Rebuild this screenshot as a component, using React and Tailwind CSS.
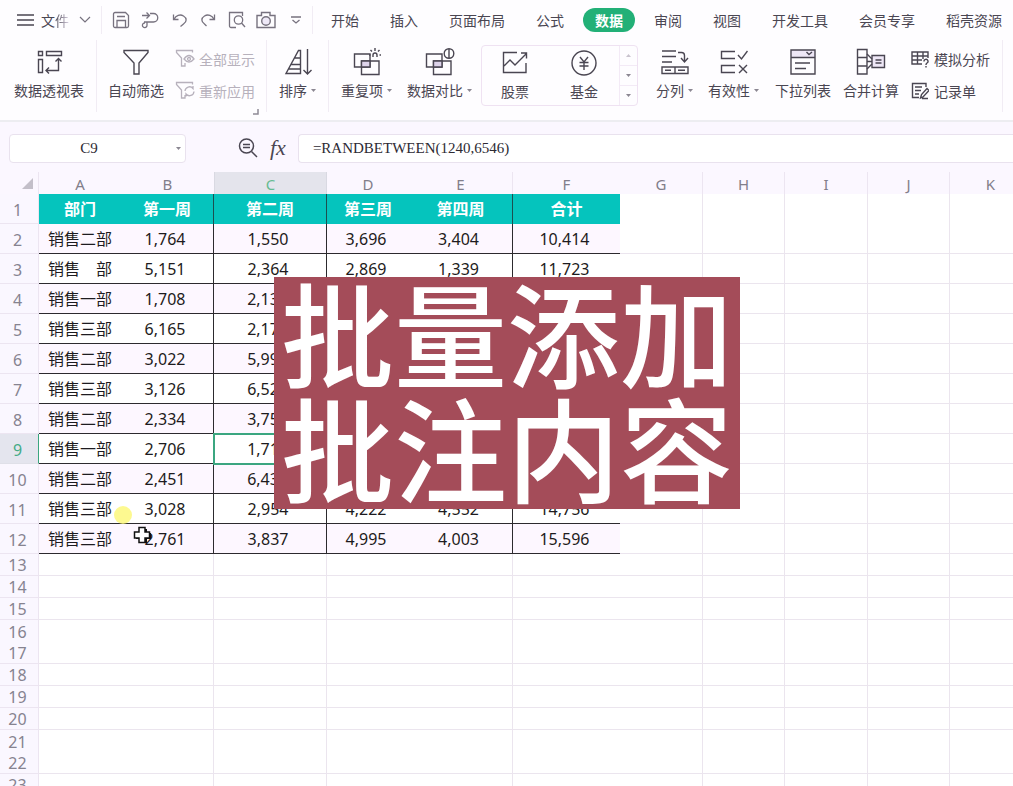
import React, { useState } from "react";

const tabs = [
  "开始",
  "插入",
  "页面布局",
  "公式",
  "数据",
  "审阅",
  "视图",
  "开发工具",
  "会员专享",
  "稻壳资源",
];

const columns = [
  { name: "A", width: "w-[82px]" },
  { name: "B", width: "w-[93px]", line: true },
  { name: "C", width: "w-[113px]", line: true },
  { name: "D", width: "w-[82px]" },
  { name: "E", width: "w-[104px]", line: true },
  { name: "F", width: "w-[107px]" },
  { name: "G", width: "w-[83px]", line: true },
  { name: "H", width: "w-[82px]", line: true },
  { name: "I", width: "w-[83px]", line: true },
  { name: "J", width: "w-[82px]", line: true },
  { name: "K", width: "w-[82px]", line: true },
];

const titles = ["部门", "第一周", "第二周", "第三周", "第四周", "合计"];

const data = [
  ["销售二部", "1,764", "1,550", "3,696", "3,404", "10,414"],
  ["销售　部", "5,151", "2,364", "2,869", "1,339", "11,723"],
  ["销售一部", "1,708", "2,13", "", "", ""],
  ["销售三部", "6,165", "2,17", "", "", ""],
  ["销售二部", "3,022", "5,99", "", "", ""],
  ["销售三部", "3,126", "6,52", "", "", ""],
  ["销售二部", "2,334", "3,75", "", "", ""],
  ["销售一部", "2,706", "1,71", "", "", ""],
  ["销售二部", "2,451", "6,43", "", "", ""],
  ["销售三部", "3,028", "2,954", "4,222", "4,552", "14,756"],
  ["销售三部", "2,761", "3,837", "4,995", "4,003", "15,596"],
];

const blankRows = [13, 14, 15, 16, 17, 18, 19, 20, 21, 22, 23];
const noLine = [16, 21];

const Icon = ({ w = 28, h = 28, sw = 1.4, children }) => (
  <svg
    width={w}
    height={h}
    viewBox={`0 0 ${w} ${h}`}
    fill="none"
    stroke="currentColor"
    strokeWidth={sw}
    aria-hidden="true"
    className="shrink-0"
  >
    {children}
  </svg>
);

const Caret = () => (
  <svg width="5" height="3" viewBox="0 0 5 3" fill="#8b8792" aria-hidden="true" className="shrink-0">
    <path d="M0 0h5L2.5 3z" />
  </svg>
);

const Divider = ({ className }) => <div className={`w-px bg-[#f1ecf4] ${className}`} />;

const QuickButton = ({ label, className, children }) => (
  <button type="button" aria-label={label} className={`shrink-0 text-[#77727f] ${className}`}>
    {children}
  </button>
);

const RibbonButton = ({ label, caret, className, children }) => (
  <button type="button" className={`flex shrink-0 flex-col items-center ${className}`}>
    {children}
    <span className="flex items-center gap-1 whitespace-nowrap leading-7">
      {label}
      {caret && <Caret />}
    </span>
  </button>
);

const SmallButton = ({ label, className, children }) => (
  <button type="button" className={`flex items-center whitespace-nowrap leading-5 ${className}`}>
    {children}
    {label}
  </button>
);

const TopBar = () => {
  const [active, setActive] = useState("数据");

  return (
    <div className="flex h-10 items-center pl-[17px] pr-[11px]">
      <button type="button" className="flex shrink-0 items-center gap-[7px] whitespace-nowrap">
        <Icon w={17} h={14}>
          <path d="M0 2h17M0 7h17M0 12h17" />
        </Icon>
        <span>
          文<span className="bg-linear-to-r from-[#4a4652] to-[#dcd4e4] bg-clip-text text-transparent">件</span>
        </span>
      </button>
      <QuickButton label="更多" className="ml-[10px]">
        <Icon w={12} h={8} sw={1.2}>
          <path d="M1 1l5 5 5-5" />
        </Icon>
      </QuickButton>
      <Divider className="ml-[10px] h-7" />
      <QuickButton label="保存" className="ml-[10px]">
        <Icon w={18} h={18} sw={1.3}>
          <path d="M1.5 3a1.5 1.5 0 0 1 1.5-1.500h10.500L16.500 4.500V15a1.500 1.500 0 0 1-1.500 1.500H3A1.500 1.500 0 0 1 1.500 15zM5 16V9.500h8.500V16M5 5.500h8" />
        </Icon>
      </QuickButton>
      <QuickButton label="输出" className="ml-[11px]">
        <Icon w={18} h={18} sw={1.3}>
          <path d="M1 4.500h7M5.500 1.500l3 3-3 3M9 2.500h3.500a4 4 0 0 1 0 8.500H3M6 11v3a2.300 2.300 0 1 1-2-2" />
        </Icon>
      </QuickButton>
      <QuickButton label="撤销" className="ml-[13px]">
        <Icon w={16} h={16} sw={1.3}>
          <path d="M1.500 2.500v5h5M2 7.200C4 3.500 8 1.800 11.500 4s3.500 5.500 0 8l-3 2.500" />
        </Icon>
      </QuickButton>
      <QuickButton label="恢复" className="ml-3">
        <Icon w={16} h={16} sw={1.3}>
          <path d="M14.500 2.500v5h-5M14 7.200C12 3.500 8 1.800 4.500 4s-3.500 5.500 0 8l2 2" />
        </Icon>
      </QuickButton>
      <QuickButton label="打印预览" className="ml-3">
        <Icon w={18} h={18} sw={1.3}>
          <path d="M8 16.500H3a1.500 1.500 0 0 1-1.500-1.500V1.500h13V5" />
          <circle cx="10.500" cy="9" r="4.200" />
          <path d="M13.500 12l3.500 4" />
        </Icon>
      </QuickButton>
      <QuickButton label="截图" className="ml-[10px]">
        <Icon w={20} h={18} sw={1.4}>
          <path d="M1 4.500h4.500v-3H14v3h5v12H1z" />
          <circle cx="10" cy="10" r="4.300" fill="#efe9f8" />
        </Icon>
      </QuickButton>
      <QuickButton label="自定义快速访问" className="ml-[15px]">
        <Icon w={10} h={8} sw={1.3}>
          <path d="M0 1h10M1.500 4L5 7l3.500-3" />
        </Icon>
      </QuickButton>
      <Divider className="ml-[11px] h-7" />
      <nav className="ml-[18px] flex flex-1 items-center justify-between whitespace-nowrap">
        {tabs.map((tab) => (
          <button
            key={tab}
            type="button"
            onClick={() => setActive(tab)}
            className={
              tab === active
                ? "-mx-3 rounded-full bg-[#22b077] px-3 font-bold leading-6 text-white"
                : "leading-6"
            }
          >
            {tab}
          </button>
        ))}
      </nav>
    </div>
  );
};

const Ribbon = () => (
  <div className="flex h-20 items-start pl-[14px]">
    <RibbonButton label="数据透视表" className="pt-2">
      <Icon>
        <path d="M3.500 3.500h4v4h-4zM11.500 3.500h15v4h-15zM3.500 11.500h4v13h-4z" />
        <path d="M23.500 11v11.500H11M20.500 13.500l3-3 3 3M14 19.500l-3 3 3 3" />
      </Icon>
    </RibbonButton>
    <Divider className="ml-3 h-[72px]" />
    <RibbonButton label="自动筛选" className="ml-[11px] pt-2">
      <Icon>
        <path d="M2 2.500h24v2L17 15v11h-5V15L2 4.500z" />
      </Icon>
    </RibbonButton>
    <div className="ml-[11px] flex flex-col gap-3 pt-[9px] text-[#b7b1bc]">
      <SmallButton label="全部显示" className="gap-1">
        <Icon w={20} h={20} sw={1.3}>
          <path d="M17.500 3.500v-2h-16v2L6.500 9v8H10v-3M9 10q5-7 10 0-5 6-10 0z" />
          <circle cx="14" cy="10" r="1.500" />
        </Icon>
      </SmallButton>
      <SmallButton label="重新应用" className="gap-1">
        <Icon w={20} h={20} sw={1.3}>
          <path d="M17.500 3.500v-2h-16v2L6.500 9v8H10v-3M10 10a4.500 4.500 0 0 1 8-2.500V5M19 10.500a4.500 4.500 0 0 1-8 2.500v2.500" />
        </Icon>
      </SmallButton>
      <svg width="6" height="6" viewBox="0 0 6 6" fill="none" stroke="#8f8a96" strokeWidth="1.500" className="-mr-1 -mt-1 self-end" aria-hidden="true">
        <path d="M5 0v5H0" />
      </svg>
    </div>
    <Divider className="ml-[11px] h-[72px]" />
    <RibbonButton label="排序" caret className="ml-3 pt-2">
      <Icon>
        <path d="M16.500 2.500h-2L2 25.500h14.500zM10.500 10h6M7 16.500h9.500M4.500 21h12" />
        <path d="M23.500 1v25M19.500 22l4 4 4-4" />
      </Icon>
    </RibbonButton>
    <Divider className="ml-3 h-[72px]" />
    <RibbonButton label="重复项" caret className="ml-3 pt-2">
      <Icon>
        <path d="M1.500 6H17v13H1.500z" />
        <path d="M8.500 13H26v13.500H8.500z" />
        <path d="M8.500 13H17v6H8.500z" fill="#ddd3ea" />
        <path d="M20 9V7a2 2 0 1 1 4 0v2M22 0v3M17.500 2l1.500 1.500M26.500 2L25 3.500M16 7h1.500M26.500 7H28" />
      </Icon>
    </RibbonButton>
    <RibbonButton label="数据对比" caret className="ml-[15px] pt-2">
      <Icon w={30}>
        <path d="M1.500 6H17v13H1.500z" />
        <path d="M8.500 13H26v13.500H8.500z" />
        <path d="M8.500 13H17v6H8.500z" fill="#ddd3ea" />
        <circle cx="24" cy="5.500" r="4.800" fill="#fff" />
        <path d="M24 1v9" />
      </Icon>
    </RibbonButton>
    <div className="ml-[9px] mt-[5px] flex h-[61px] shrink-0 rounded border border-[#efe2f2]">
      <RibbonButton label="股票" className="ml-[19px] pt-[3px]">
        <Icon>
          <path d="M16 3.500H2.500v20H25V14M3 17l6-6 5 5L25 5M20 4h5.500v5.500" />
        </Icon>
      </RibbonButton>
      <RibbonButton label="基金" className="ml-[41px] pt-[3px]">
        <Icon>
          <circle cx="14" cy="14" r="12" />
          <path d="M10 8l4 5 4-5M14 13v8M9.500 13.500h9M9.500 17h9" />
        </Icon>
      </RibbonButton>
      <div className="ml-[21px] flex w-[18px] flex-col divide-y divide-[#f3eaf6] border-l border-[#f3eaf6]">
        <button type="button" aria-label="向上" className="flex flex-1 items-center justify-center">
          <svg width="5" height="3" viewBox="0 0 5 3" fill="#c9c3ce"><path d="M0 3h5L2.500 0z" /></svg>
        </button>
        <button type="button" aria-label="向下" className="flex flex-1 items-center justify-center"><Caret /></button>
        <button type="button" aria-label="展开" className="flex flex-1 items-center justify-center"><Caret /></button>
      </div>
    </div>
    <RibbonButton label="分列" caret className="ml-[18px] pt-2">
      <Icon w={30}>
        <path d="M2 3h14M2 8.500h14M2 14h10M18 4.500h3.500a3 3 0 0 1 3 3V13M21 10l3.500 4 3.500-4M2 19h26v6.500H2zM15 19v6.500M5 22.300h6M18 22.300h7" />
      </Icon>
    </RibbonButton>
    <RibbonButton label="有效性" caret className="ml-[15px] pt-2">
      <Icon>
        <path d="M15 3.500H1.500v7H15M15 17.500H1.500v7H15M18 7l3.500 4L27.500 3M19 17l8 8M27 17l-8 8" />
      </Icon>
    </RibbonButton>
    <RibbonButton label="下拉列表" className="ml-4 pt-2">
      <Icon>
        <path d="M2 2h24v7H2z" fill="#eee7f6" stroke="none" />
        <path d="M2 2h24v24H2zM2 9.500h24M17.500 4L20 6.500 23 4M6 15h15M6 20.500h11" />
      </Icon>
    </RibbonButton>
    <RibbonButton label="合并计算" className="ml-3 pt-2">
      <Icon w={30}>
        <path d="M1.500 1.500H11v8H1.500zM1.500 9.500H11V18H1.500zM1.500 18H11v8H1.500z" />
        <path d="M16 7.500h12.500v12H16z" fill="#eee7f6" />
        <path d="M11 6l5 5M11 13.500h5M11 21l5-5M19.500 12h6M19.500 15h6" />
      </Icon>
    </RibbonButton>
    <div className="ml-3 flex shrink-0 flex-col gap-3 pt-[9px]">
      <SmallButton label="模拟分析" className="gap-[5px]">
        <Icon w={18} h={18}>
          <path d="M11 14H1V2h16v6M1 6h16M1 10h10M6.500 2v12M12 2v7M13 11.500a2 2 0 1 1 3 1.500q-1 .7-1 2M15 16v1.500" />
        </Icon>
      </SmallButton>
      <SmallButton label="记录单" className="gap-[5px]">
        <Icon w={18} h={18}>
          <path d="M15 5V1.500H1.500v14H8M4 5h7M4 8.500h6M4 12h4M9.500 16l1-3.500L16 6.500l2 2-6 6.500zM11 16.500h6" />
        </Icon>
      </SmallButton>
    </div>
    <Divider className="ml-3 h-[72px]" />
  </div>
);

const FormulaBar = () => (
  <div className="flex h-[50px] items-center pl-[9px] pt-[2px]">
    <div className="flex h-[29px] w-[177px] shrink-0 items-center rounded border border-[#e9e2ee] bg-white pr-1">
      <input
        aria-label="名称框"
        defaultValue="C9"
        className="min-w-0 flex-1 bg-transparent pr-2 text-center font-['Liberation_Serif',serif] text-[15px] text-[#2d2a33] outline-none"
      />
      <Caret />
    </div>
    <button type="button" aria-label="搜索" className="ml-[52px] shrink-0">
      <Icon w={20} h={20} sw={1.5}>
        <circle cx="8.500" cy="8" r="7" />
        <path d="M13.500 13.500L19 19M5 6.500h7M5 9.500h7" />
      </Icon>
    </button>
    <button type="button" aria-label="插入函数" className="ml-3 shrink-0 font-['Liberation_Serif',serif] text-[22px] italic leading-6">
      fx
    </button>
    <input
      aria-label="编辑栏"
      defaultValue="=RANDBETWEEN(1240,6546)"
      className="ml-3 h-[29px] min-w-0 flex-1 rounded-l border border-r-0 border-[#e9e2ee] bg-white pl-[14px] font-['Liberation_Serif',serif] text-[15px] text-[#2d2a33] outline-none"
    />
  </div>
);

const RowHead = ({ n, active, plain }) => (
  <th
    scope="row"
    className={`border-r p-0 pr-[3px] pt-[2px] text-[16px] font-normal ${plain ? "" : "border-b"} ${
      active
        ? "border-b-[#dfe0e8] border-r-[#3ba680] bg-[#e4e5ee] text-[#45ab86]"
        : "border-[#ece5f1] bg-[#faf7ff] text-[#868390]"
    }`}
  >
    {n}
  </th>
);

const grid = "border-[#ebe5ee]";

const Sheet = () => (
  <table className="w-[1032px] table-fixed border-separate border-spacing-0 text-center font-['Noto_Sans','Noto_Sans_CJK_SC',sans-serif]">
    <colgroup>
      <col className="w-[39px]" />
      {columns.map((c) => (
        <col key={c.name} className={c.width} />
      ))}
    </colgroup>
    <thead>
      <tr className="h-[22px] bg-[#fbf7ff] text-[15px] leading-5 text-[#827e8a]">
        <th aria-label="全选" className="border-r border-[#ece5f1] p-0">
          <svg width="11" height="11" viewBox="0 0 11 11" fill="#c3bfc9" className="ml-[22px]" aria-hidden="true">
            <path d="M11 0v11H0z" />
          </svg>
        </th>
        {columns.map((c) => (
          <th
            key={c.name}
            scope="col"
            className={`p-0 pt-px font-normal ${
              c.name === "C"
                ? "border-x border-[#d9d9e2] bg-[#e4e4ec] text-[#66bb91]"
                : c.line && c.name !== "B"
                ? "border-r border-[#ece5f1]"
                : ""
            }`}
          >
            {c.name}
          </th>
        ))}
      </tr>
    </thead>
    <tbody>
      <tr className="h-[30px]">
        <RowHead n={1} />
        {columns.map((c, i) =>
          i < 6 ? (
            <td
              key={c.name}
              className={`bg-[#05c4bd] p-0 text-[16px] font-bold text-white ${c.line ? "border-r border-[#1c4f50]" : ""}`}
            >
              {titles[i]}
            </td>
          ) : (
            <td key={c.name} className={`border-r ${grid}`} />
          )
        )}
      </tr>
      {data.map((row, r) => (
        <tr key={r} className="h-[30px] text-[16px] text-[#1d1b20]">
          <RowHead n={r + 2} active={r === 7} />
          {columns.map((c, i) => {
            if (i > 5) return <td key={c.name} className={`border-b border-r ${grid}`} />;
            const selected = r === 7 && i === 2;
            const clipped = row[i].length === 4 && i === 2;
            return (
              <td
                key={c.name}
                className={`border-b border-[#2c2a2e] p-0 pt-[2px] leading-[27px] ${c.line ? "border-r" : ""} ${
                  r % 2 === 0 ? "bg-[#fdf7ff]" : "bg-white"
                } ${i > 0 ? (clipped ? "pr-[14px]" : "pr-1") : ""} ${
                  selected ? "outline-2 -outline-offset-1 outline-[#3ba680]" : ""
                }`}
              >
                {row[i]}
              </td>
            );
          })}
        </tr>
      ))}
      {blankRows.map((n) => (
        <tr key={n} className="h-[22px] leading-[19px]">
          <RowHead n={n} plain={noLine.includes(n)} />
          {columns.map((c) => (
            <td
              key={c.name}
              className={`p-0 ${grid} ${c.line ? "border-r" : ""} ${noLine.includes(n) ? "" : "border-b"}`}
            />
          ))}
        </tr>
      ))}
    </tbody>
  </table>
);

const App = () => {
  return (
    <div className="relative flex h-screen flex-col overflow-hidden bg-white font-['Noto_Sans_CJK_SC',sans-serif] text-[14px] text-[#4a4652]">
      <header className="shrink-0 border-b-2 border-[#ededf1] bg-[#fefdff]">
        <TopBar />
        <Ribbon />
      </header>
      <div className="shrink-0 bg-[#fbf7ff]">
        <FormulaBar />
      </div>
      <main className="min-h-0 flex-1 overflow-hidden">
        <Sheet />
      </main>

      {/* mouse highlight and cell cursor */}
      <div className="absolute left-[114px] top-[506px] size-[18px] rounded-full bg-[#fcf774]/80" />
      <svg className="absolute left-[133px] top-[526px]" width="19" height="19" viewBox="0 0 19 19" aria-hidden="true">
        <path d="M7 3h7v4h4v6h-4v4H7v-4H3V7h4z" fill="#111" />
        <path d="M6 1.500h6v4.500h4.500v6H12v4.500H6V12H1.500V6H6z" fill="#fff" stroke="#111" strokeWidth="1.500" />
      </svg>

      <div className="absolute left-[274px] top-[277px] flex flex-col gap-[10px] bg-[#a44c59] px-[7px] pb-[11px] pt-px text-[113px] font-medium leading-[105px] text-white">
        <p>批量添加</p>
        <p>批注内容</p>
      </div>
    </div>
  );
};

export default App;
